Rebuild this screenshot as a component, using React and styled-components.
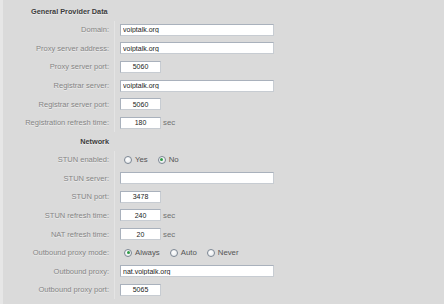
import React from 'react'
import styled, { createGlobalStyle } from 'styled-components'

const Global = createGlobalStyle`
    html, body {
        margin: 0;
        padding: 0;
        background: #dadada;
    }
    body {
        font-family: "Liberation Sans", Arial, sans-serif;
        font-size: 7.5px;
    }
`

const Page = styled.div`
    width: 444px;
    height: 304px;
    box-sizing: border-box;
    padding-top: 2px;
    border-left: 3px solid #e6e6e6;
    background: #dadada;
    overflow: hidden;
`

const Row = styled.div`
    display: flex;
    align-items: center;
    height: 18.57px;
`

const Label = styled.div`
    width: 112px;
    flex: none;
    box-sizing: border-box;
    height: 100%;
    display: flex;
    align-items: center;
    justify-content: flex-end;
    padding-right: 5px;
    color: ${p => (p.$head ? '#3c3c3c' : '#858585')};
    font-size: ${p => (p.$head ? '7.3px' : '7.5px')};
    font-weight: ${p => (p.$head ? 'bold' : 'normal')};
    text-shadow: 0 1px 0 #ececec;
    border-right: 1px solid ${p => (p.$head ? 'transparent' : '#e4e4e4')};
    white-space: nowrap;
`

const Title = styled.div`
    padding-left: 28px;
    color: #3c3c3c;
    font-size: 7.3px;
    font-weight: bold;
    text-shadow: 0 1px 0 #ececec;
`

const Value = styled.div`
    display: flex;
    align-items: center;
    padding-left: 5px;
    gap: 2px;
`

const Input = styled.input`
    box-sizing: border-box;
    width: ${p => (p.$small ? '41px' : '154px')};
    height: 12px;
    margin: 0;
    padding: 0 2px;
    border: 1px solid #a9b1bc;
    border-bottom-color: #c7ccd2;
    border-right-color: #c7ccd2;
    background: #fff;
    font-family: "Liberation Sans", Arial, sans-serif;
    font-size: 7px;
    color: #222;
    text-align: ${p => (p.$small ? 'center' : 'left')};
    outline: none;
`

const Unit = styled.span`
    color: #707070;
    font-size: 7.8px;
`

const RadioGroup = styled.div`
    display: flex;
    align-items: center;
    padding-left: 9px;
`

const RadioItem = styled.label`
    display: flex;
    align-items: center;
    gap: 3px;
    margin-right: 10px;
    color: #555;
    font-size: 7.8px;
`

const Dot = styled.span`
    width: 8px;
    height: 8px;
    box-sizing: border-box;
    border-radius: 50%;
    border: 1px solid #7c8794;
    background: radial-gradient(circle at 40% 35%, #ffffff, #e2e5e8);
    display: grid;
    place-items: center;
    &::after {
        content: '';
        width: 3px;
        height: 3px;
        border-radius: 50%;
        background: ${p => (p.$on ? '#2f9a46' : 'transparent')};
    }
`

function Field({ label, value, small, unit }) {
    return (
        <Row>
            <Label>{label}</Label>
            <Value>
                <Input $small={small} defaultValue={value} readOnly />
                {unit && <Unit>{unit}</Unit>}
            </Value>
        </Row>
    )
}

function Radios({ label, options, checked }) {
    return (
        <Row>
            <Label>{label}</Label>
            <RadioGroup>
                {options.map(o => (
                    <RadioItem key={o}>
                        <Dot $on={o === checked} />
                        {o}
                    </RadioItem>
                ))}
            </RadioGroup>
        </Row>
    )
}

export default function App() {
    return (
        <Page>
            <Global />
            <Row><Title>General Provider Data</Title></Row>
            <Field label="Domain:" value="voiptalk.org" />
            <Field label="Proxy server address:" value="voiptalk.org" />
            <Field label="Proxy server port:" value="5060" small />
            <Field label="Registrar server:" value="voiptalk.org" />
            <Field label="Registrar server port:" value="5060" small />
            <Field label="Registration refresh time:" value="180" small unit="sec" />
            <Row><Label $head>Network</Label></Row>
            <Radios label="STUN enabled:" options={['Yes', 'No']} checked="No" />
            <Field label="STUN server:" value="" />
            <Field label="STUN port:" value="3478" small />
            <Field label="STUN refresh time:" value="240" small unit="sec" />
            <Field label="NAT refresh time:" value="20" small unit="sec" />
            <Radios label="Outbound proxy mode:" options={['Always', 'Auto', 'Never']} checked="Always" />
            <Field label="Outbound proxy:" value="nat.voiptalk.org" />
            <Field label="Outbound proxy port:" value="5065" small />
        </Page>
    )
}
